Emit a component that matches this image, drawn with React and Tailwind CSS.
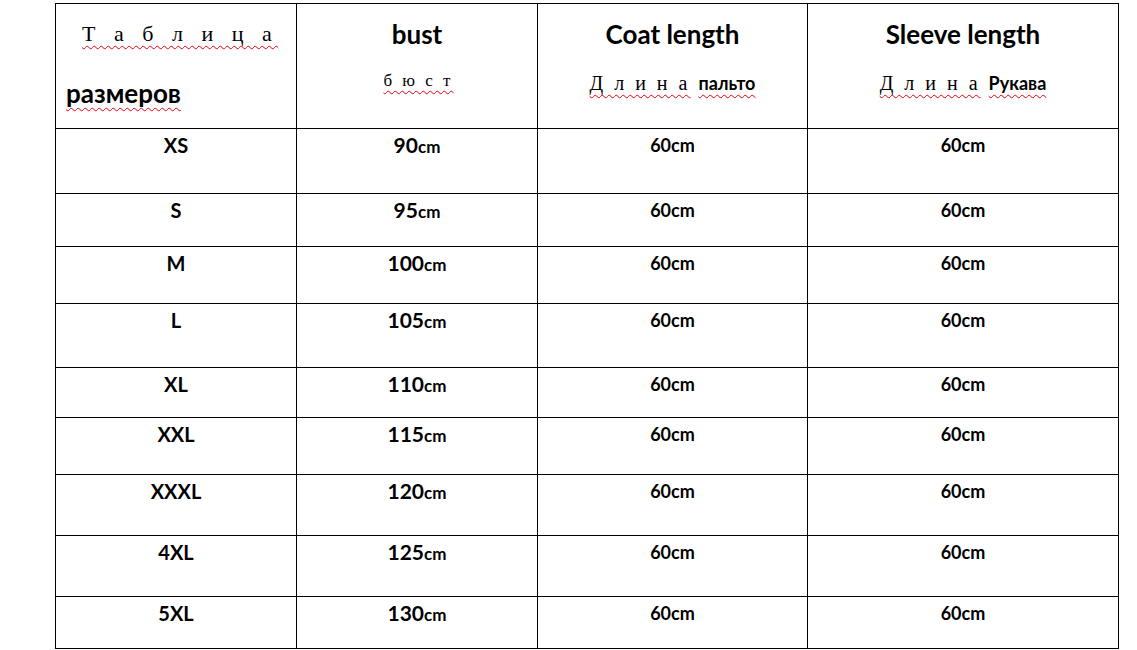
const sans = "font-['Lato','Open_Sans','Noto_Sans',sans-serif] font-bold";
const serif = "font-['Liberation_Serif','Times_New_Roman',serif]";
const wavy = "underline decoration-wavy decoration-red-600 decoration-1 underline-offset-[4px]";

// size chart rows: size, bust, coat length, sleeve length
const rows = [
  ["XS", "90", "60", "60"],
  ["S", "95", "60", "60"],
  ["M", "100", "60", "60"],
  ["L", "105", "60", "60"],
  ["XL", "110", "60", "60"],
  ["XXL", "115", "60", "60"],
  ["XXXL", "120", "60", "60"],
  ["4XL", "125", "60", "60"],
  ["5XL", "130", "60", "60"],
];

function Cell({ children, className = "" }) {
  return (
    <div className={`border-r border-b border-black flex flex-col items-center ${className}`}>
      {children}
    </div>
  );
}

export default function App() {
  return (
    <div className="w-[1137px] h-[650px] bg-white text-black pt-[3px] pl-[55px] overflow-hidden">
      <div className="grid w-[1064px] grid-cols-[241px_241px_270px_311px] grid-rows-[125px_65px_53px_57px_64px_50px_57px_61px_61px_52px] border-l border-t border-black">
        {/* Header */}
        <div className="border-r border-b border-black flex flex-col">
          <div className={`${serif} text-[22px] leading-[24px] tracking-[6.5px] mt-[18px] pl-[26px]`}>
            <span className={wavy}>Т а б л и ц а</span>
          </div>
          <div className={`${sans} text-[26px] leading-[30px] mt-[32px] pl-[10px]`}>
            <span className={wavy}>размеров</span>
          </div>
        </div>
        <Cell>
          <div className={`${sans} text-[26px] leading-[30px] mt-[15px]`}>bust</div>
          <div className={`${serif} text-[17px] leading-[20px] tracking-[3px] mt-[22px] pl-[3px]`}>
            <span className={wavy}>б ю с т</span>
          </div>
        </Cell>
        <Cell>
          <div className={`${sans} text-[26px] leading-[30px] mt-[15px]`}>Coat length</div>
          <div className="flex items-baseline gap-[8px] mt-[24px] leading-[20px]">
            <span className={`${serif} text-[20px] tracking-[3px] ${wavy}`}>Д л и н а</span>
            <span className={`${sans} text-[18px] ${wavy}`}>пальто</span>
          </div>
        </Cell>
        <Cell>
          <div className={`${sans} text-[26px] leading-[30px] mt-[15px]`}>Sleeve length</div>
          <div className="flex items-baseline gap-[8px] mt-[24px] leading-[20px]">
            <span className={`${serif} text-[20px] tracking-[3px] ${wavy}`}>Д л и н а</span>
            <span className={`${sans} text-[18px] ${wavy}`}>Рукава</span>
          </div>
        </Cell>

        {/* Body rows */}
        {rows.map(([size, bust, coat, sleeve]) => (
          <div key={size} className="contents">
            <Cell>
              <div className={`${sans} text-[20px] leading-[24px] mt-[4px]`}>{size}</div>
            </Cell>
            <Cell>
              <div className={`${sans} leading-[24px] mt-[4px]`}>
                <span className="text-[21px]">{bust}</span>
                <span className="text-[17px]">cm</span>
              </div>
            </Cell>
            <Cell>
              <div className={`${sans} text-[18px] leading-[24px] mt-[4px]`}>{coat}cm</div>
            </Cell>
            <Cell>
              <div className={`${sans} text-[18px] leading-[24px] mt-[4px]`}>{sleeve}cm</div>
            </Cell>
          </div>
        ))}
      </div>
    </div>
  );
}
